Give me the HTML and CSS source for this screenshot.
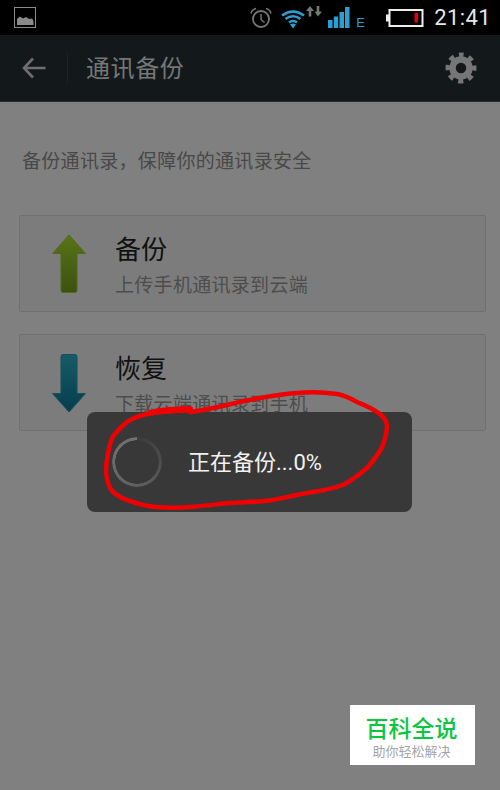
FILE: index.html
```html
<!DOCTYPE html>
<html lang="zh">
<head>
<meta charset="utf-8">
<title>通讯备份</title>
<link rel="stylesheet" href="styles.css">
</head>
<body>
<div class="screen">
  <header class="statusbar">
    <svg class="ic-image" width="22" height="21" viewBox="0 0 22 21"><rect x="0.5" y="0.5" width="21" height="20" fill="none" stroke="#8a8a8a"/><path d="M3 18V12L6 9.500L9 11.500L12 10L15 12L18 11.500L19.500 14V18Z" fill="#8a8a8a"/></svg>
    <div class="status-right">
      <svg class="ic-alarm" width="22" height="22" viewBox="0 0 22 22"><circle cx="11" cy="12" r="8" fill="none" stroke="#777" stroke-width="1.800"/><path d="M11 7V12.500L14.500 15.500" fill="none" stroke="#777" stroke-width="1.400"/><path d="M1 6.500Q2 2.500 6 1.500M21 6.500Q20 2.500 16 1.500" fill="none" stroke="#777" stroke-width="1.500"/></svg>
      <svg class="ic-wifi" width="24" height="20" viewBox="0 0 24 20"><g fill="none" stroke="#2a9fd0" stroke-width="2.600"><path d="M1 6.500Q12 -1.500 23 6.500"/><path d="M4.500 10Q12 4.500 19.500 10"/><path d="M8 13.500Q12 10.500 16 13.500"/></g><path d="M9 15.500Q12 13.500 15 15.500L12 19.500Z" fill="#2a9fd0"/></svg>
      <svg class="ic-updown" width="16" height="11" viewBox="0 0 16 11"><path d="M4 0L8 5H5.300V10.500H2.700V5H0ZM12 10.500L8.500 5.500H10.700V0H13.300V5.500H16Z" fill="#777"/></svg>
      <svg class="ic-signal" width="22" height="22" viewBox="0 0 22 22"><path d="M0 13H4.500V21H0ZM5.800 9.500H10.200V21H5.800ZM11.500 5H16V21H11.500ZM17 0H21.500V21H17Z" fill="#2a9fd0"/></svg>
      <span class="net">E</span>
      <svg class="ic-battery" width="38" height="18" viewBox="0 0 38 18"><rect x="0" y="5.500" width="3" height="7" fill="#eee"/><rect x="3.500" y="1" width="33" height="16" fill="none" stroke="#eee" stroke-width="2"/><rect x="28.500" y="4" width="3.500" height="9.500" fill="#e80000"/></svg>
      <span class="clock">21:41</span>
    </div>
  </header>

  <nav class="toolbar">
    <svg class="ic-back" width="24" height="22" viewBox="0 0 24 22"><path d="M11 1.500L2 11L11 20.500M2 11H23.500" fill="none" stroke="#6e6e6e" stroke-width="2.600"/></svg>
    <span class="divider"></span>
    <h1 class="title">通讯备份</h1>
    <svg class="ic-gear" width="32" height="32" viewBox="0 0 32 32"><circle cx="16" cy="16" r="13" fill="none" stroke="#767676" stroke-width="5" stroke-dasharray="5.100 5.110" stroke-dashoffset="2.550" transform="rotate(-90 16 16)"/><circle cx="16" cy="16" r="8.500" fill="none" stroke="#767676" stroke-width="6.500"/></svg>
  </nav>

  <main class="content">
    <p class="intro">备份通讯录<span class="comma">，</span>保障你的通讯录安全</p>
    <section class="card">
      <svg class="arrow" width="36" height="60" viewBox="0 0 36 60"><defs><linearGradient id="g1" x1="0" y1="0" x2="0" y2="1"><stop offset="0" stop-color="#587418"/><stop offset="1" stop-color="#3c5110"/></linearGradient></defs><path d="M18 1L34.500 19.500H26V56.500Q26 58.500 24 58.500H12Q10 58.500 10 56.500V19.500H1.500Z" fill="url(#g1)" stroke="#51691a" stroke-linejoin="round"/></svg>
      <div class="card-text">
        <h2 class="card-title">备份</h2>
        <p class="card-sub">上传手机通讯录到云端</p>
      </div>
    </section>
    <section class="card">
      <svg class="arrow" width="36" height="60" viewBox="0 0 36 60"><defs><linearGradient id="g2" x1="0" y1="0" x2="0" y2="1"><stop offset="0" stop-color="#185a66"/><stop offset="1" stop-color="#043e4e"/></linearGradient></defs><path d="M18 59L34.500 40.500H26V3.500Q26 1.500 24 1.500H12Q10 1.500 10 3.500V40.500H1.500Z" fill="url(#g2)" stroke="#14505e" stroke-linejoin="round"/></svg>
      <div class="card-text">
        <h2 class="card-title">恢复</h2>
        <p class="card-sub">下载云端通讯录到手机</p>
      </div>
    </section>
  </main>

  <div class="dialog">
    <div class="spinner"></div>
    <span class="dialog-text">正在备份...0%</span>
  </div>

  <svg class="scribble" width="500" height="790" viewBox="0 0 500 790"><path d="M190 410C170 412 158 411 147 414C138 416 133 418 127 422C120 428 116 432 112 438C108 450 106 460 106 472C107 482 109 488 113 492C120 498 126 500 133 502C142 505 150 507 157 507C170 508 180 508 190 507C205 506 218 504 230 503C245 502 260 502 273 500C288 497 300 494 313 492C325 490 335 488 343 485C352 480 360 474 367 468C374 460 380 452 383 445C386 436 387 430 387 425C386 419 382 415 377 412C370 407 364 405 357 402C350 398 344 395 337 394C323 392 310 392 297 393C283 394 272 396 260 398C248 400 238 402 227 405C213 408 200 411 190 412" fill="none" stroke="#f00000" stroke-width="4.500" stroke-linecap="round"/><path d="M150 413C165 409 175 410 190 409" fill="none" stroke="#f00000" stroke-width="6" stroke-linecap="round"/></svg>

  <aside class="badge">
    <span class="badge-title">百科全说</span>
    <span class="badge-sub">助你轻松解决</span>
  </aside>
</div>
</body>
</html>
```

FILE: styles.css
```css
* { box-sizing: border-box; }
html, body { margin: 0; padding: 0; }
body {
  width: 500px;
  height: 790px;
  overflow: hidden;
  background: #808080;
  font-family: "Noto Sans CJK SC", "Liberation Sans", sans-serif;
}
svg { display: block; flex: none; }
.screen { position: relative; width: 500px; height: 790px; }

.statusbar {
  height: 35px;
  background: #000;
  display: flex;
  align-items: center;
  padding: 0 9px 0 14px;
}
.status-right { margin-left: auto; display: flex; align-items: center; }
.ic-alarm { margin-top: 1px; }
.ic-wifi { margin-left: 9px; margin-top: 2px; }
.ic-updown { margin-left: 1px; margin-top: -12px; }
.ic-signal { margin-left: 6px; }
.net {
  margin-left: 6px;
  margin-top: 9px;
  width: 10px;
  font: 13px/1 "Liberation Sans", sans-serif;
  color: #2a9fd0;
}
.ic-battery { margin-left: 20px; }
.clock {
  margin-left: 10px;
  font: 22px/1 Roboto, sans-serif;
  color: #e6e6e6;
  letter-spacing: 0.4px;
}

.toolbar {
  height: 67px;
  background: #13181b;
  border-bottom: 1px solid #2a2d2f;
  display: flex;
  align-items: center;
  padding: 0 23px 0 22px;
}
.divider { width: 1px; height: 32px; background: #1d2124; margin-left: 21px; }
.title {
  margin: -3px 0 0 18px;
  font-size: 24px;
  font-weight: 400;
  color: #767676;
  letter-spacing: 0.6px;
}
.ic-gear { margin-left: auto; }

.content { padding: 44px 14px 0 19px; }
.intro {
  margin: 0 0 0 3px;
  font-size: 19px;
  line-height: 28px;
  color: #484848;
  letter-spacing: 0.3px;
}
.comma { font-family: "Noto Sans CJK TC", sans-serif; }
.card {
  height: 97px;
  margin-top: 41px;
  background: #7c7c7c;
  border: 1px solid #707070;
  border-radius: 2px;
  display: flex;
  align-items: center;
  padding-left: 31px;
}
.card + .card { margin-top: 22px; }
.arrow { margin-top: 0; }
.card-text { margin-left: 28px; margin-top: 1px; }
.card-title {
  margin: 0;
  font-size: 26px;
  line-height: 34px;
  font-weight: 400;
  color: #111;
}
.card-sub {
  margin: 5px 0 0;
  font-size: 19px;
  line-height: 28px;
  color: #4d4d4d;
  letter-spacing: 0.3px;
}

.dialog {
  position: absolute;
  left: 87px;
  top: 412px;
  width: 325px;
  height: 100px;
  background: #383838;
  border-radius: 8px;
  display: flex;
  align-items: center;
  padding-left: 25px;
}
.spinner {
  width: 50px;
  height: 50px;
  border-radius: 50%;
  background: conic-gradient(#3c3c3c, #4e4e4e 25%, #606060 50%, #6a6a6a 75%, #727272);
  -webkit-mask: radial-gradient(circle closest-side, transparent 21.500px, #000 22px);
  mask: radial-gradient(circle closest-side, transparent 21.500px, #000 22px);
}
.dialog-text {
  margin-left: 26px;
  margin-top: 2px;
  font-family: Roboto, "Noto Sans CJK SC", sans-serif;
  font-size: 22px;
  line-height: 30px;
  color: #f2f2f2;
}
.scribble { position: absolute; left: 0; top: 0; pointer-events: none; }

.badge {
  position: absolute;
  left: 350px;
  top: 705px;
  width: 125px;
  height: 60px;
  background: #fff;
  display: flex;
  flex-direction: column;
  align-items: center;
  font-family: Roboto, "Noto Sans CJK SC", sans-serif;
}
.badge-title {
  margin-top: 11px;
  margin-right: 2px;
  font-size: 23px;
  line-height: 28px;
  font-weight: 500;
  color: #0cc63e;
}
.badge-sub {
  margin-right: 2px;
  font-size: 13px;
  line-height: 16px;
  color: #a5a5a5;
}
```
